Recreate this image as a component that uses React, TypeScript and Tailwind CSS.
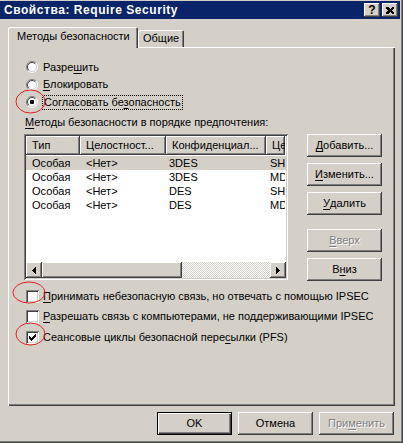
import React from "react";

const raised =
  "shadow-[inset_-1px_-1px_#404040,inset_1px_1px_#ffffff,inset_-2px_-2px_#808080,inset_2px_2px_#d4d0c8]";
const defRaised =
  "shadow-[inset_1px_1px_#000000,inset_-1px_-1px_#000000,inset_2px_2px_#ffffff,inset_-2px_-2px_#404040,inset_-3px_-3px_#808080]";
const sunken =
  "shadow-[inset_1px_1px_#808080,inset_-1px_-1px_#ffffff,inset_2px_2px_#404040,inset_-2px_-2px_#d4d0c8]";
const dimText = "text-[#808080] [text-shadow:1px_1px_0_#ffffff]";

function Acc({ text, at }: { text: string; at: number }) {
  return (
    <>
      {text.slice(0, at)}
      <span className="underline underline-offset-[2px]">{text[at]}</span>
      {text.slice(at + 1)}
    </>
  );
}

function Btn({ text, at, disabled, def }: { text: string; at: number; disabled?: boolean; def?: boolean }) {
  return (
    <div
      className={`flex h-[23px] w-[75px] shrink-0 items-center justify-center bg-[#d4d0c8] ${def ? defRaised : raised} ${
        disabled ? dimText : ""
      }`}
    >
      {at >= 0 ? <Acc text={text} at={at} /> : text}
    </div>
  );
}

function Radio({ on }: { on?: boolean }) {
  return (
    <svg width="12" height="12" viewBox="0 0 12 12" className="shrink-0">
      <circle cx="6" cy="6" r="5" fill="#ffffff" />
      <path d="M2.1 9.9 A5.5 5.5 0 0 1 9.9 2.1" fill="none" stroke="#808080" />
      <path d="M9.9 2.1 A5.5 5.5 0 0 1 2.1 9.9" fill="none" stroke="#ffffff" />
      <path d="M2.8 9.2 A4.5 4.5 0 0 1 9.2 2.8" fill="none" stroke="#404040" />
      <path d="M9.2 2.8 A4.5 4.5 0 0 1 2.8 9.2" fill="none" stroke="#d4d0c8" />
      {on && <rect x="4" y="4" width="4" height="4" rx="1.2" fill="#000000" />}
    </svg>
  );
}

const checkPx = [
  [6, 0], [5, 1], [6, 1], [0, 2], [4, 2], [5, 2], [6, 2], [0, 3], [1, 3], [3, 3], [4, 3], [5, 3],
  [0, 4], [1, 4], [2, 4], [3, 4], [4, 4], [1, 5], [2, 5], [3, 5], [2, 6],
];

function Check({ on }: { on?: boolean }) {
  return (
    <div className={`h-[13px] w-[13px] shrink-0 bg-white ${sunken}`}>
      {on && (
        <svg width="13" height="13" viewBox="0 0 13 13" shapeRendering="crispEdges">
          {checkPx.map(([x, y], i) => (
            <rect key={i} x={x + 3} y={y + 3} width="1" height="1" fill="#000" />
          ))}
        </svg>
      )}
    </div>
  );
}

const rows = [
  ["Особая", "<Нет>", "3DES", "SH"],
  ["Особая", "<Нет>", "3DES", "MD"],
  ["Особая", "<Нет>", "DES", "SH"],
  ["Особая", "<Нет>", "DES", "MD"],
];
const cols = ["w-[54px]", "w-[86px]", "w-[100px]", "w-[19px]"];

function ListView() {
  return (
    <div className={`flex h-[146px] w-[264px] shrink-0 flex-col bg-white p-[2px] ${sunken}`}>
      <div className="flex h-[19px] shrink-0 overflow-hidden">
        {["Тип", "Целостност...", "Конфиденциал...", "Це"].map((h, i) => (
          <div
            key={i}
            className={`${cols[i]} flex shrink-0 items-center overflow-hidden whitespace-nowrap bg-[#d4d0c8] pl-[6px] ${raised}`}
          >
            {h}
          </div>
        ))}
      </div>
      <div className="flex-1 pt-[1px]">
        {rows.map((r, ri) => (
          <div key={ri} className={`flex h-[14px] items-center ${ri === 0 ? "bg-[#d4d0c8]" : ""}`}>
            {r.map((c, ci) => (
              <div
                key={ci}
                className={`${cols[ci]} shrink-0 overflow-hidden whitespace-nowrap ${ci === 2 ? "pl-[3px]" : ci === 3 ? "pl-[4px]" : "pl-[6px]"}`}
              >
                {c}
              </div>
            ))}
          </div>
        ))}
      </div>
      <div className="flex h-[16px] shrink-0">
        <div className={`flex h-[16px] w-[16px] items-center justify-center bg-[#d4d0c8] ${raised}`}>
          <svg width="4" height="7" viewBox="0 0 4 7" shapeRendering="crispEdges">
            <path d="M4 0 L0 3.5 L4 7 Z" fill="#000" />
          </svg>
        </div>
        <div className={`h-[16px] w-[140px] bg-[#d4d0c8] ${raised}`} />
        <div className="h-[16px] flex-1 bg-[image:repeating-conic-gradient(#ffffff_0_25%,#d4d0c8_0_50%)] bg-[length:2px_2px]" />
        <div className={`flex h-[16px] w-[16px] items-center justify-center bg-[#d4d0c8] ${raised}`}>
          <svg width="4" height="7" viewBox="0 0 4 7" shapeRendering="crispEdges">
            <path d="M0 0 L4 3.5 L0 7 Z" fill="#000" />
          </svg>
        </div>
      </div>
    </div>
  );
}

export default function App() {
  return (
    <div className="relative h-[443px] w-[403px] overflow-hidden bg-[#d4d0c8] font-['Liberation_Sans',Arial,sans-serif] text-[11px] leading-[13px] text-black shadow-[inset_-1px_-1px_#404040,inset_-2px_-2px_#808080]">
      {/* title bar */}
      <div className="mr-[3px] mt-[1px] flex h-[18px] items-center justify-between bg-[#0a246a] pl-[4px] pr-[2px]">
        <span className="text-[12px] font-bold tracking-[0.55px] text-white">Свойства: Require Security</span>
        <div className="flex gap-[2px]">
          <div className={`flex h-[14px] w-[16px] items-center justify-center bg-[#d4d0c8] text-[12px] font-bold ${raised}`}>?</div>
          <div className={`flex h-[14px] w-[16px] items-center justify-center bg-[#d4d0c8] ${raised}`}>
            <svg width="8" height="7" viewBox="0 0 8 7" shapeRendering="crispEdges">
              <path d="M0 0h2l2 2l2-2h2v1l-2 2.5l2 2.5v1h-2l-2-2l-2 2h-2v-1l2-2.5l-2-2.5z" fill="#000" />
            </svg>
          </div>
        </div>
      </div>

      <div className="ml-[8px] mt-[8px] w-[387px]">
        {/* tabs */}
        <div className="flex h-[20px] items-end">
          <div className="relative z-10 -mb-px h-[21px] w-[130px] rounded-t-[2px] bg-[#d4d0c8] pl-[9px] pt-[3px] shadow-[inset_1px_1px_#ffffff,inset_-1px_0_#404040,inset_-2px_0_#808080]">
            Методы безопасности
          </div>
          <div className="h-[17px] w-[46px] rounded-t-[2px] bg-[#d4d0c8] pl-[5px] pt-[2px] shadow-[inset_1px_1px_#ffffff,inset_-1px_0_#404040,inset_-2px_0_#808080]">
            Общие
          </div>
        </div>

        {/* panel */}
        <div className="flex h-[359px] flex-col bg-[#d4d0c8] pl-[16px] shadow-[inset_1px_1px_#ffffff,inset_-1px_-1px_#404040,inset_-2px_-2px_#808080]">
          <div className="mt-[11px] flex flex-col pl-[2px]">
            <div className="flex h-[18px] items-center gap-[5px]">
              <Radio />
              <span>
                <Acc text="Разрешить" at={5} />
              </span>
            </div>
            <div className="flex h-[17px] items-center gap-[5px]">
              <Radio />
              <span>
                <Acc text="Блокировать" at={0} />
              </span>
            </div>
            <div className="flex h-[18px] items-center gap-[4px]">
              <Radio on />
              <span className="border border-dotted border-black px-px">
                <Acc text="Согласовать безопасность" at={14} />
              </span>
            </div>
          </div>

          <div className="mt-[4px] flex h-[14px] items-center pl-px">
            <Acc text="Методы безопасности в порядке предпочтения:" at={0} />
          </div>

          <div className="mt-[5px] flex">
            <ListView />
            <div className="ml-[19px] flex flex-col">
              <Btn text="Добавить..." at={0} />
              <div className="mt-[6px]">
                <Btn text="Изменить..." at={0} />
              </div>
              <div className="mt-[6px]">
                <Btn text="Удалить" at={0} />
              </div>
              <div className="mt-[14px]">
                <Btn text="Вверх" at={0} disabled />
              </div>
              <div className="mt-[6px]">
                <Btn text="Вниз" at={1} />
              </div>
            </div>
          </div>

          <div className="mt-[5px] flex flex-col pl-[2px]">
            <div className="flex h-[20px] items-center gap-[4px]">
              <Check />
              <span>
                <Acc text="Принимать небезопасную связь, но отвечать с помощью IPSEC" at={0} />
              </span>
            </div>
            <div className="flex h-[20px] items-center gap-[4px]">
              <Check />
              <span>
                <Acc text="Разрешать связь с компьютерами, не поддерживающими IPSEC" at={0} />
              </span>
            </div>
            <div className="mt-px flex h-[20px] items-center gap-[4px]">
              <Check on />
              <span>
                <Acc text="Сеансовые циклы безопасной пересылки (PFS)" at={31} />
              </span>
            </div>
          </div>
        </div>

        {/* dialog buttons */}
        <div className="mt-[6px] flex justify-end gap-[6px] pr-px">
          <Btn text="OK" at={-1} def />
          <Btn text="Отмена" at={-1} />
          <Btn text="Применить" at={3} disabled />
        </div>
      </div>

      {/* red annotation circles */}
      <svg className="pointer-events-none absolute left-0 top-0" width="403" height="443">
        <ellipse cx="30.5" cy="101.5" rx="14.5" ry="11.5" fill="none" stroke="#e02020" />
        <ellipse cx="29" cy="292.5" rx="16" ry="10.5" fill="none" stroke="#e02020" />
        <ellipse cx="30.5" cy="334" rx="14.5" ry="11" fill="none" stroke="#e02020" />
      </svg>
    </div>
  );
}
